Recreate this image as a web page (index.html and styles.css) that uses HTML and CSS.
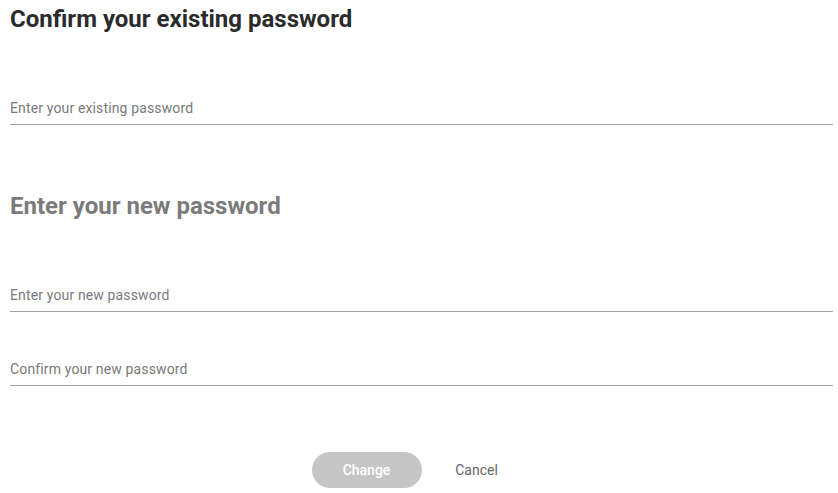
FILE: index.html
```html
<!DOCTYPE html>
<html lang="en">
<head>
<meta charset="utf-8">
<title>Change password</title>
<link rel="stylesheet" href="styles.css">
</head>
<body>
<form class="page">
  <h1 class="title">Confirm your existing password</h1>
  <label class="field field-current">
    <input class="input" type="password" placeholder="Enter your existing password">
  </label>
  <h2 class="title title-muted">Enter your new password</h2>
  <label class="field field-new">
    <input class="input" type="password" placeholder="Enter your new password">
  </label>
  <label class="field field-confirm">
    <input class="input" type="password" placeholder="Confirm your new password">
  </label>
  <div class="actions">
    <button class="btn btn-primary" type="button" disabled>Change</button>
    <button class="btn btn-text" type="button">Cancel</button>
  </div>
</form>
</body>
</html>
```
FILE: styles.css
```css
* { box-sizing: border-box; }
html, body { margin: 0; background: #fff; }
body { font-family: Roboto, "Noto Sans", Arial, sans-serif; }

.page {
  display: flex;
  flex-direction: column;
  padding: 0 5px 0 10px;
}

.title {
  margin: 0;
  font-size: 24px;
  line-height: 26px;
  font-weight: 700;
  color: #2b2b2b;
  padding-top: 6px;
}
.title-muted { color: #7b7b7b; padding-top: 0; margin-top: 68px; }

.field {
  display: block;
  border-bottom: 1px solid #a3a3a3;
}
.field-current { margin-top: 66px; }
.field-new { margin-top: 66px; }
.field-confirm { margin-top: 47px; }

.input {
  display: block;
  width: 100%;
  border: 0;
  outline: none;
  padding: 0 0 6px;
  height: 26px;
  font-family: inherit;
  font-size: 14px;
  letter-spacing: 0.14px;
  color: #333;
  background: transparent;
}
.input::placeholder { color: #7a7a7a; }

.actions {
  display: flex;
  justify-content: center;
  margin-top: 66px;
}
.btn {
  width: 110px;
  height: 36px;
  border: 0;
  border-radius: 18px;
  font-family: inherit;
  font-size: 14px;
  cursor: pointer;
}
.btn-primary {
  background: #c6c6c6;
  color: #fff;
  font-weight: 500;
}
.btn-text {
  background: transparent;
  color: #666;
}
```
